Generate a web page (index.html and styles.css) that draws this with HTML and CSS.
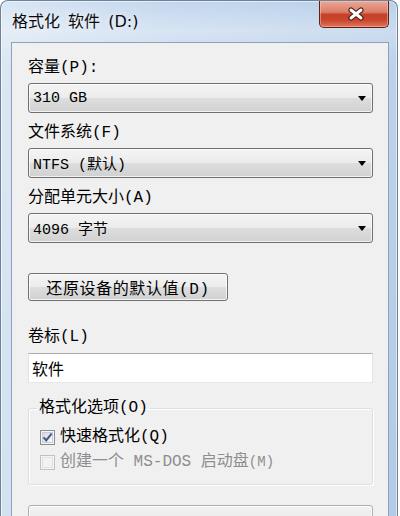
FILE: index.html
```html
<!DOCTYPE html>
<html lang="zh-CN">
<head>
<meta charset="utf-8">
<title>格式化 软件 (D:)</title>
<link rel="stylesheet" href="styles.css">
</head>
<body>
<div class="window">
  <div class="titlebar">
    <span class="title">格式化 软件 (D:)</span>
    <div class="close" aria-label="关闭">
      <svg width="20" height="14" viewBox="0 0 20 14">
        <path d="M5 3 L15 11 M15 3 L5 11" stroke="#4a1a12" stroke-width="5.2" stroke-linecap="round" fill="none"/>
        <path d="M5 3 L15 11 M15 3 L5 11" stroke="#ffffff" stroke-width="3" stroke-linecap="round" fill="none"/>
      </svg>
    </div>
  </div>
  <div class="client">
    <div class="label">容量(P):</div>
    <div class="combo"><span class="value">310 GB</span><span class="arrow"></span></div>

    <div class="label">文件系统(F)</div>
    <div class="combo"><span class="value">NTFS (默认)</span><span class="arrow"></span></div>

    <div class="label">分配单元大小(A)</div>
    <div class="combo"><span class="value">4096 字节</span><span class="arrow"></span></div>

    <div class="button">还原设备的默认值(D)</div>

    <div class="label label-vol">卷标(L)</div>
    <div class="input">软件</div>

    <fieldset class="group">
      <legend>格式化选项(O)</legend>
      <div class="check">
        <svg class="box" width="15" height="15" viewBox="0 0 15 15">
          <defs>
            <linearGradient id="cg" x1="0" y1="0" x2="1" y2="1">
              <stop offset="0" stop-color="#d4d7dc"/>
              <stop offset="1" stop-color="#fbfbfb"/>
            </linearGradient>
          </defs>
          <rect x="0.5" y="0.5" width="14" height="14" fill="#f6f6f6" stroke="#8a8c8f"/>
          <rect x="2.5" y="2.5" width="10" height="10" fill="url(#cg)" stroke="#c9ccd2"/>
          <path d="M3.6 7.4 L6.2 10.4 L11.6 3.6" fill="none" stroke="#44598c" stroke-width="2.1"/>
        </svg>
        <span>快速格式化(Q)</span>
      </div>
      <div class="check disabled">
        <svg class="box" width="15" height="15" viewBox="0 0 15 15">
          <rect x="0.5" y="0.5" width="14" height="14" fill="#f4f4f4" stroke="#c2c2c2"/>
          <rect x="2.5" y="2.5" width="10" height="10" fill="#f2f2f2" stroke="#e2e2e2"/>
        </svg>
        <span>创建一个 MS-DOS 启动盘<small>(M)</small></span>
      </div>
    </fieldset>

    <div class="bar"></div>
  </div>
</div>
</body>
</html>
```

FILE: styles.css
```css
html, body {
  margin: 0;
  padding: 0;
}

body {
  width: 400px;
  height: 516px;
  overflow: hidden;
  background: #ffffff;
  font-family: "Liberation Mono", "Noto Sans CJK SC", monospace;
  color: #000;
}

.window {
  width: 398px;
  height: 530px;
  box-sizing: border-box;
  border: 1px solid #6f8299;
  border-bottom: none;
  border-radius: 8px 8px 0 0;
  background:
    linear-gradient(to right, rgba(255,255,255,0.35), rgba(255,255,255,0) 40%, rgba(20,80,160,0.06)),
    linear-gradient(to bottom, #c3d7ee 0, #d8e5f3 30px, #c8daee 60px, #bcd2ea 100%);
  box-shadow: inset 0 0 0 1px rgba(255,255,255,0.55);
  display: flex;
  flex-direction: column;
  overflow: hidden;
}

.titlebar {
  flex: none;
  height: 41px;
  display: flex;
  align-items: flex-start;
}

.title {
  font-family: "DejaVu Sans", "Noto Sans CJK SC", sans-serif;
  font-size: 16px;
  line-height: 20px;
  word-spacing: 3px;
  margin: 11px 0 0 11px;
  color: #0b0b0b;
  text-shadow: 0 0 6px rgba(255,255,255,0.8);
}

.close {
  margin-left: auto;
  margin-right: 8px;
  width: 70px;
  height: 27px;
  box-sizing: border-box;
  border: 1px solid #5a2319;
  border-top: none;
  border-radius: 0 0 5px 5px;
  background: linear-gradient(to bottom, #eaa898 0, #db7f69 42%, #c7412a 52%, #c8442b 72%, #e0745a 100%);
  box-shadow: inset 0 0 0 1px rgba(255,210,200,0.45);
  display: flex;
  align-items: center;
  justify-content: center;
  padding-left: 4px;
}

.client {
  flex: 1;
  margin: 0 8px 0 10px;
  border: 1px solid #8da2ba;
  border-bottom: none;
  background: #f0f0f0;
  padding: 15px 15px 0 16px;
  display: flex;
  flex-direction: column;
  overflow: hidden;
}

.label {
  font-size: 16px;
  line-height: 20px;
  height: 20px;
  margin-bottom: 5px;
  white-space: nowrap;
}

.combo {
  height: 30px;
  box-sizing: border-box;
  border: 1px solid #707070;
  border-radius: 3px;
  background: linear-gradient(to bottom, #f4f4f4 0, #ececec 48%, #dddddd 52%, #d1d1d1 100%);
  box-shadow: inset 0 0 0 1px rgba(255,255,255,0.7);
  display: flex;
  align-items: center;
  padding: 0 6px 0 4px;
  margin-bottom: 10px;
  font-size: 15px;
  white-space: pre;
}

.arrow {
  margin-left: auto;
  width: 0;
  height: 0;
  border-left: 4px solid transparent;
  border-right: 4px solid transparent;
  border-top: 5px solid #000;
}

.button {
  margin-top: 20px;
  width: 200px;
  height: 28px;
  box-sizing: border-box;
  border: 1px solid #707070;
  border-radius: 3px;
  background: linear-gradient(to bottom, #f4f4f4 0, #ececec 48%, #dddddd 52%, #d1d1d1 100%);
  box-shadow: inset 0 0 0 1px rgba(255,255,255,0.75);
  display: flex;
  align-items: center;
  justify-content: center;
  font-size: 16px;
  letter-spacing: 0.6px;
  white-space: nowrap;
}

.label-vol {
  margin-top: 26px;
  margin-bottom: 6px;
}

.input {
  height: 30px;
  box-sizing: border-box;
  background: #fff;
  border: 1px solid #dfe3e9;
  border-top-color: #abadb3;
  border-bottom-color: #e3e9ef;
  display: flex;
  align-items: center;
  padding-left: 3px;
  font-size: 16px;
}

.group {
  margin: 15px 0 0;
  padding: 8px 0 11px 11px;
  border: 1px solid #d5dfe5;
  border-radius: 3px;
  box-shadow: inset 1px 1px 0 #fff, 1px 1px 0 #fff;
  display: flex;
  flex-direction: column;
  gap: 3px;
}

.group legend {
  font-size: 16px;
  line-height: 20px;
  padding: 0 2px;
  margin-left: -3px;
}

.check {
  height: 22px;
  display: flex;
  align-items: center;
  gap: 5px;
  font-size: 16px;
  line-height: 20px;
  white-space: pre;
}

.check .box {
  flex: none;
}

.check.disabled {
  color: #8e8e8e;
}

.check small {
  font-size: 14px;
}

.bar {
  margin-top: 20px;
  height: 24px;
  flex: none;
  box-sizing: border-box;
  border: 1px solid #adb0b4;
  border-radius: 3px;
  background: linear-gradient(to bottom, #f3f3f3, #e4e4e4);
  box-shadow: inset 0 0 0 1px rgba(255,255,255,0.7);
}
```
